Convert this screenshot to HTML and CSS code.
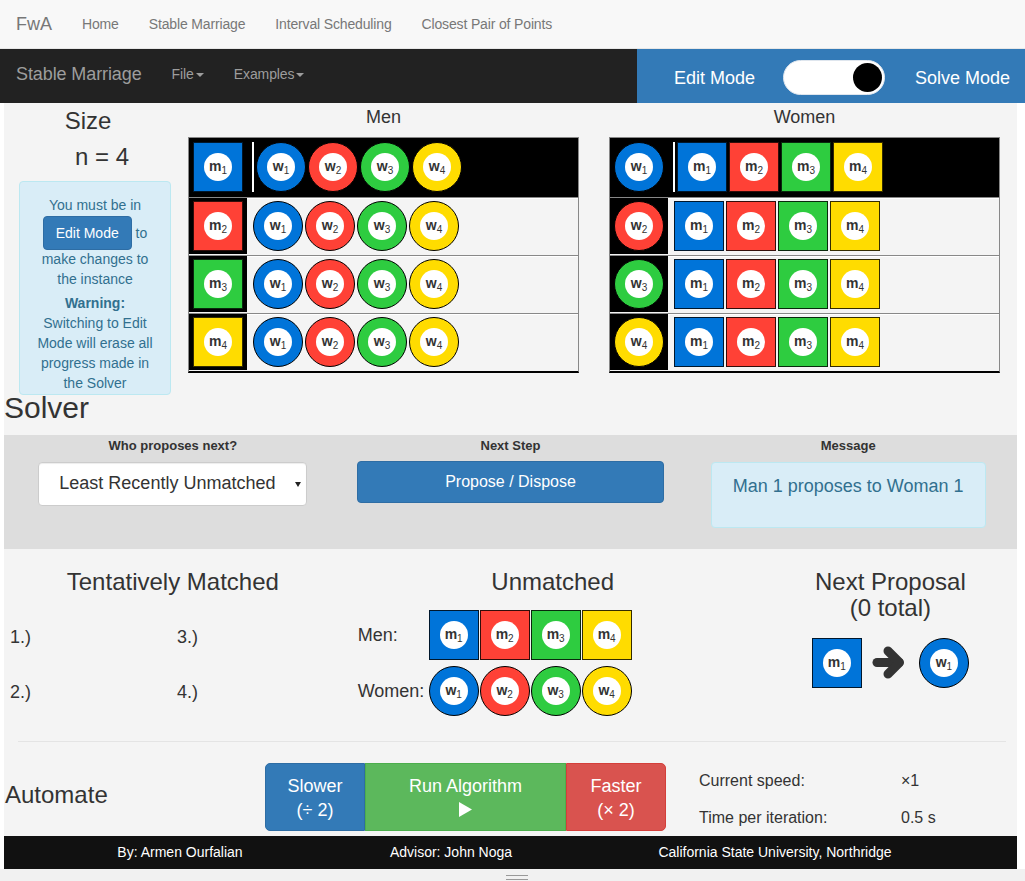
FILE: index.html
```html
<!DOCTYPE html>
<html lang="en">
<head>
<meta charset="utf-8">
<title>FwA - Stable Marriage</title>
<link rel="stylesheet" href="styles.css">
</head>
<body>
<nav class="topnav">
  <a class="brand" href="#">FwA</a>
  <a class="navlink" href="#">Home</a>
  <a class="navlink" href="#">Stable Marriage</a>
  <a class="navlink" href="#">Interval Scheduling</a>
  <a class="navlink" href="#">Closest Pair of Points</a>
</nav>
<nav class="appnav">
  <div class="appnav-left">
    <span class="app-brand">Stable Marriage</span>
    <span class="app-menu">File<span class="caret"></span></span>
    <span class="app-menu">Examples<span class="caret"></span></span>
  </div>
  <div class="mode-switch">
    <span>Edit Mode</span>
    <span class="toggle"><span class="knob"></span></span>
    <span>Solve Mode</span>
  </div>
</nav>

<main class="page">
  <section class="instance">
    <div class="size-col">
      <h3 class="size-title">Size</h3>
      <div class="size-value">n = 4</div>
      <div class="info-alert">
        <p>You must be in <button class="btn btn-primary">Edit Mode</button> to make changes to the instance</p>
        <p class="warn"><strong>Warning:</strong><br>Switching to Edit Mode will erase all progress made in the Solver</p>
      </div>
    </div>

    <div class="prefs">
      <h4>Men</h4>
      <div class="pref-table">
        <div class="pref-row active">
          <div class="owner"><span class="tile sq c1"><span class="lbl">m<sub>1</sub></span></span></div>
          <span class="divider"></span>
          <div class="list">
            <span class="tile ring c1"><span class="lbl">w<sub>1</sub></span></span>
            <span class="tile ring c2"><span class="lbl">w<sub>2</sub></span></span>
            <span class="tile ring c3"><span class="lbl">w<sub>3</sub></span></span>
            <span class="tile ring c4"><span class="lbl">w<sub>4</sub></span></span>
          </div>
        </div>
        <div class="pref-row">
          <div class="owner"><span class="tile sq c2"><span class="lbl">m<sub>2</sub></span></span></div>
          <div class="list plain">
            <span class="tile ring c1"><span class="lbl">w<sub>1</sub></span></span>
            <span class="tile ring c2"><span class="lbl">w<sub>2</sub></span></span>
            <span class="tile ring c3"><span class="lbl">w<sub>3</sub></span></span>
            <span class="tile ring c4"><span class="lbl">w<sub>4</sub></span></span>
          </div>
        </div>
        <div class="pref-row">
          <div class="owner"><span class="tile sq c3"><span class="lbl">m<sub>3</sub></span></span></div>
          <div class="list plain">
            <span class="tile ring c1"><span class="lbl">w<sub>1</sub></span></span>
            <span class="tile ring c2"><span class="lbl">w<sub>2</sub></span></span>
            <span class="tile ring c3"><span class="lbl">w<sub>3</sub></span></span>
            <span class="tile ring c4"><span class="lbl">w<sub>4</sub></span></span>
          </div>
        </div>
        <div class="pref-row">
          <div class="owner"><span class="tile sq c4"><span class="lbl">m<sub>4</sub></span></span></div>
          <div class="list plain">
            <span class="tile ring c1"><span class="lbl">w<sub>1</sub></span></span>
            <span class="tile ring c2"><span class="lbl">w<sub>2</sub></span></span>
            <span class="tile ring c3"><span class="lbl">w<sub>3</sub></span></span>
            <span class="tile ring c4"><span class="lbl">w<sub>4</sub></span></span>
          </div>
        </div>
      </div>
    </div>

    <div class="prefs women">
      <h4>Women</h4>
      <div class="pref-table">
        <div class="pref-row active">
          <div class="owner"><span class="tile ring c1"><span class="lbl">w<sub>1</sub></span></span></div>
          <span class="divider"></span>
          <div class="list">
            <span class="tile sq c1"><span class="lbl">m<sub>1</sub></span></span>
            <span class="tile sq c2"><span class="lbl">m<sub>2</sub></span></span>
            <span class="tile sq c3"><span class="lbl">m<sub>3</sub></span></span>
            <span class="tile sq c4"><span class="lbl">m<sub>4</sub></span></span>
          </div>
        </div>
        <div class="pref-row">
          <div class="owner"><span class="tile ring c2"><span class="lbl">w<sub>2</sub></span></span></div>
          <div class="list plain">
            <span class="tile sq c1"><span class="lbl">m<sub>1</sub></span></span>
            <span class="tile sq c2"><span class="lbl">m<sub>2</sub></span></span>
            <span class="tile sq c3"><span class="lbl">m<sub>3</sub></span></span>
            <span class="tile sq c4"><span class="lbl">m<sub>4</sub></span></span>
          </div>
        </div>
        <div class="pref-row">
          <div class="owner"><span class="tile ring c3"><span class="lbl">w<sub>3</sub></span></span></div>
          <div class="list plain">
            <span class="tile sq c1"><span class="lbl">m<sub>1</sub></span></span>
            <span class="tile sq c2"><span class="lbl">m<sub>2</sub></span></span>
            <span class="tile sq c3"><span class="lbl">m<sub>3</sub></span></span>
            <span class="tile sq c4"><span class="lbl">m<sub>4</sub></span></span>
          </div>
        </div>
        <div class="pref-row">
          <div class="owner"><span class="tile ring c4"><span class="lbl">w<sub>4</sub></span></span></div>
          <div class="list plain">
            <span class="tile sq c1"><span class="lbl">m<sub>1</sub></span></span>
            <span class="tile sq c2"><span class="lbl">m<sub>2</sub></span></span>
            <span class="tile sq c3"><span class="lbl">m<sub>3</sub></span></span>
            <span class="tile sq c4"><span class="lbl">m<sub>4</sub></span></span>
          </div>
        </div>
      </div>
    </div>
  </section>

  <h2 class="solver-title">Solver</h2>
  <section class="solver">
    <div class="solver-col">
      <div class="solver-label">Who proposes next?</div>
      <div class="select"><span>Least Recently Unmatched</span><span class="select-caret"></span></div>
    </div>
    <div class="solver-col">
      <div class="solver-label">Next Step</div>
      <button class="btn-step">Propose / Dispose</button>
    </div>
    <div class="solver-col">
      <div class="solver-label">Message</div>
      <div class="msg">Man 1 proposes to Woman 1</div>
    </div>
  </section>

  <section class="status">
    <div class="matched">
      <h3>Tentatively Matched</h3>
      <div class="matched-list">
        <span>1.)</span>
        <span>2.)</span>
        <span>3.)</span>
        <span>4.)</span>
      </div>
    </div>
    <div class="unmatched">
      <h3>Unmatched</h3>
      <div class="unmatched-rows">
        <span>Men:</span>
        <div class="list tight">
          <span class="tile sq c1"><span class="lbl">m<sub>1</sub></span></span>
          <span class="tile sq c2"><span class="lbl">m<sub>2</sub></span></span>
          <span class="tile sq c3"><span class="lbl">m<sub>3</sub></span></span>
          <span class="tile sq c4"><span class="lbl">m<sub>4</sub></span></span>
        </div>
        <span>Women:</span>
        <div class="list tight">
          <span class="tile ring c1"><span class="lbl">w<sub>1</sub></span></span>
          <span class="tile ring c2"><span class="lbl">w<sub>2</sub></span></span>
          <span class="tile ring c3"><span class="lbl">w<sub>3</sub></span></span>
          <span class="tile ring c4"><span class="lbl">w<sub>4</sub></span></span>
        </div>
      </div>
    </div>
    <div class="next">
      <h3>Next Proposal<br>(0 total)</h3>
      <div class="proposal">
        <span class="tile sq c1"><span class="lbl">m<sub>1</sub></span></span>
        <svg class="arrow" width="35" height="35" viewBox="0 0 35 35" aria-hidden="true">
          <path d="M5 17.5 H27" stroke="#333" stroke-width="9" stroke-linecap="round" fill="none"/>
          <path d="M16 6 L27.5 17.5 L16 29" stroke="#333" stroke-width="9" stroke-linecap="round" stroke-linejoin="round" fill="none"/>
        </svg>
        <span class="tile ring c1"><span class="lbl">w<sub>1</sub></span></span>
      </div>
    </div>
  </section>

  <div class="rule"></div>

  <section class="automate">
    <h3 class="automate-title">Automate</h3>
    <div class="btn-group">
      <button class="btn-lg slower">Slower<br>(÷ 2)</button>
      <button class="btn-lg run">Run Algorithm<br><svg class="play" width="13" height="15" viewBox="0 0 13 15" aria-hidden="true"><path d="M0 0 L13 7.5 L0 15 Z" fill="#fff"/></svg></button>
      <button class="btn-lg faster">Faster<br>(× 2)</button>
    </div>
    <div class="speed-info">
      <span>Current speed:</span><span>×1</span>
      <span>Time per iteration:</span><span>0.5 s</span>
    </div>
  </section>

  <footer class="footer">
    <span>By: Armen Ourfalian</span>
    <span>Advisor: John Noga</span>
    <span class="footer-last">California State University, Northridge</span>
  </footer>
</main>
<div class="resize-strip"><span class="handle"></span></div>
</body>
</html>
```
FILE: styles.css
```css
* { box-sizing: border-box; }
html, body { margin: 0; padding: 0; }
body {
  width: 1025px;
  background: #fff;
  font-family: "Liberation Sans", Arial, sans-serif;
  font-size: 14px;
  line-height: 1.42857;
  color: #333;
}
h2, h3, h4 { font-weight: 500; line-height: 1.1; margin: 0; }
button { font-family: inherit; cursor: pointer; }

/* top navigation */
.topnav {
  display: flex;
  height: 49px;
  background: #f8f8f8;
  border-bottom: 1px solid #e7e7e7;
  padding-left: 1px;
}
.topnav a {
  color: #777;
  text-decoration: none;
  padding: 14px 15px;
  line-height: 20px;
  font-size: 14px;
}
.topnav .navlink { letter-spacing: -0.15px; }
.topnav .brand { font-size: 18px; }

/* app navigation */
.appnav { display: flex; height: 54px; background: #222; }
.appnav-left { flex: 1; display: flex; padding-left: 1px; }
.app-brand, .app-menu {
  color: #9d9d9d;
  padding: 15px;
  line-height: 20px;
}
.app-brand { font-size: 18px; letter-spacing: -0.1px; }
.app-menu { font-size: 14px; letter-spacing: -0.1px; }
.caret {
  display: inline-block;
  width: 0; height: 0;
  margin-left: 2px;
  vertical-align: middle;
  border-top: 4px solid #9d9d9d;
  border-left: 4px solid transparent;
  border-right: 4px solid transparent;
}
.mode-switch {
  width: 388px;
  background: #337ab7;
  display: flex;
  align-items: center;
  padding: 2px 0 0 37px;
  color: #fff;
  font-size: 18px;
}
.mode-switch > span:not(.toggle) { padding-top: 3px; }
.toggle {
  width: 102px;
  height: 35px;
  margin: 0 30px 0 28px;
  border-radius: 18px;
  background: #fff;
  border: 1px solid #dfe6ee;
  display: flex;
  align-items: center;
  justify-content: flex-end;
  padding-right: 2px;
}
.knob { width: 29px; height: 29px; border-radius: 50%; background: #000; }

/* page */
.page { margin-left: 4px; width: 1013px; background: #f4f4f4; }

.instance {
  display: flex;
  height: 288px;
}
.size-col { width: 184px; flex: none; padding: 0 17px 0 15px; }
.size-title { font-size: 24px; margin-top: 5px; text-align: center; padding-right: 14px; }
.size-value { font-size: 24px; line-height: 1.1; margin-top: 10px; text-align: center; padding-left: 14px; }
.info-alert {
  margin-top: 10px;
  background: #d9edf7;
  border: 1px solid #bce8f1;
  border-radius: 4px;
  color: #31708f;
  text-align: center;
  padding: 14px 15px 0;
}
.info-alert p { margin: 0; }
.info-alert .warn { margin-top: 4px; }
.btn {
  display: inline-block;
  padding: 6px 12px;
  font-size: 14px;
  line-height: 20px;
  border: 1px solid transparent;
  border-radius: 4px;
}
.btn-primary { background: #337ab7; border-color: #2e6da4; color: #fff; }

/* preference tables */
.prefs { width: 391px; flex: none; }
.prefs.women { margin-left: 30px; }
.prefs h4 { font-size: 18px; margin: 5px 0 9px; text-align: center; }
.pref-table { border: 1px solid #888; border-bottom: 2px solid #000; }
.pref-row {
  display: flex;
  align-items: center;
  height: 58px;
  border-top: 1px solid #888;
  box-shadow: inset 0 1px 0 #fff;
}
.pref-row.active { background: #000; height: 59px; border-top: 0; box-shadow: none; }
.owner { background: #000; padding: 3px 4px; display: flex; }
.divider { width: 2px; height: 50px; background: #fff; margin: 0 2px 0 5px; }
.list { display: flex; gap: 2px; }
.list.plain { margin-left: 6px; }
.list.tight { gap: 1px; }

.tile {
  width: 50px;
  height: 50px;
  flex: none;
  display: flex;
  align-items: center;
  justify-content: center;
}
.tile.sq { border: 1px solid rgba(0, 0, 0, 0.8); }
.tile.ring { border: 1px solid #000; border-radius: 50%; }
.c1 { background: #0074d9; }
.c2 { background: #ff4136; }
.c3 { background: #2ecc40; }
.c4 { background: #ffdc00; }
.lbl {
  display: block;
  width: 28px;
  height: 28px;
  border-radius: 50%;
  background: #fff;
  text-align: center;
  line-height: 27px;
  font-size: 14px;
  font-weight: bold;
  color: #333;
}
.lbl sub { font-size: 10px; vertical-align: -3px; line-height: 0; font-weight: normal; }

/* solver */
.solver-title { font-size: 30px; margin: 0 0 11px; }
.solver {
  display: grid;
  grid-template-columns: repeat(3, 1fr);
  height: 114px;
  background: #ddd;
  padding-top: 2px;
}
.solver-col { padding: 0 15px; text-align: center; }
.solver-label { font-size: 13px; font-weight: bold; line-height: 18px; margin-bottom: 7px; }
.select {
  display: inline-flex;
  align-items: center;
  width: 269px;
  height: 44px;
  background: #fff;
  border: 1px solid #ccc;
  border-radius: 4px;
  box-shadow: inset 0 1px 1px rgba(0, 0, 0, 0.075);
  padding-left: 20px;
  font-size: 18px;
  text-align: left;
}
.select-caret {
  margin-left: auto;
  margin-right: 5px;
  width: 0; height: 0;
  border-top: 5px solid #222;
  border-left: 3px solid transparent;
  border-right: 3px solid transparent;
}
.btn-step {
  display: block;
  width: 100%;
  height: 42px;
  margin-top: -1px;
  background: #337ab7;
  border: 1px solid #2e6da4;
  border-radius: 4px;
  color: #fff;
  font-size: 16px;
}
.msg {
  width: 275px;
  height: 66px;
  margin: 0 auto;
  background: #d9edf7;
  border: 1px solid #bce8f1;
  border-radius: 4px;
  color: #31708f;
  font-size: 18px;
  line-height: 26px;
  padding-top: 10px;
}

/* status */
.status {
  display: grid;
  grid-template-columns: 4fr 5fr 3fr;
  height: 192px;
  padding-top: 20px;
}
.status h3 { font-size: 24px; text-align: center; }
.matched-list {
  display: grid;
  grid-template-columns: 167px 1fr;
  grid-template-rows: 50px 50px;
  grid-auto-flow: column;
  row-gap: 5px;
  align-items: center;
  margin-top: 17px;
  padding-left: 6px;
  font-size: 18px;
}
.unmatched-rows {
  display: grid;
  grid-template-columns: 71px auto;
  justify-content: start;
  align-items: center;
  row-gap: 6px;
  margin-top: 15px;
  padding-left: 16px;
  font-size: 18px;
}
.proposal {
  display: flex;
  justify-content: center;
  align-items: center;
  margin-top: 16px;
}
.arrow { margin: 0 12px 0 10px; }

.rule { height: 1px; background: #e4e4e4; margin: 0 11px 0 14px; }

/* automate */
.automate {
  display: grid;
  grid-template-columns: 261px 401px auto;
  align-items: center;
  padding: 21px 0 5px;
}
.automate-title { font-size: 24px; margin-bottom: 4px; padding-left: 1px; }
.btn-group { display: flex; }
.btn-lg {
  height: 68px;
  padding: 10px 0;
  font-size: 18px;
  line-height: 24px;
  color: #fff;
  border: 1px solid;
  text-align: center;
}
.play { vertical-align: -1px; }
.slower { width: 100px; background: #337ab7; border-color: #2e6da4; border-radius: 5px 0 0 5px; }
.run { width: 201px; background: #5cb85c; border-color: #4cae4c; border-radius: 0; }
.faster { width: 100px; background: #d9534f; border-color: #d43f3a; border-radius: 0 5px 5px 0; }
.speed-info {
  display: grid;
  grid-template-columns: 202px auto;
  row-gap: 14px;
  margin-left: 33px;
  padding-top: 3px;
  font-size: 16px;
  line-height: 23px;
}

/* footer */
.footer {
  display: grid;
  grid-template-columns: 352px 190px 1fr;
  align-items: center;
  height: 33px;
  background: #111;
  color: #fff;
  text-align: center;
  font-size: 14px;
}
.footer-last { padding-right: 13px; }
.resize-strip { height: 12px; background: #f1f1f1; padding: 6px 0 0 506px; }
.handle {
  display: block;
  width: 22px;
  height: 5px;
  border-top: 1px solid #999;
  border-bottom: 1px solid #999;
}
```
